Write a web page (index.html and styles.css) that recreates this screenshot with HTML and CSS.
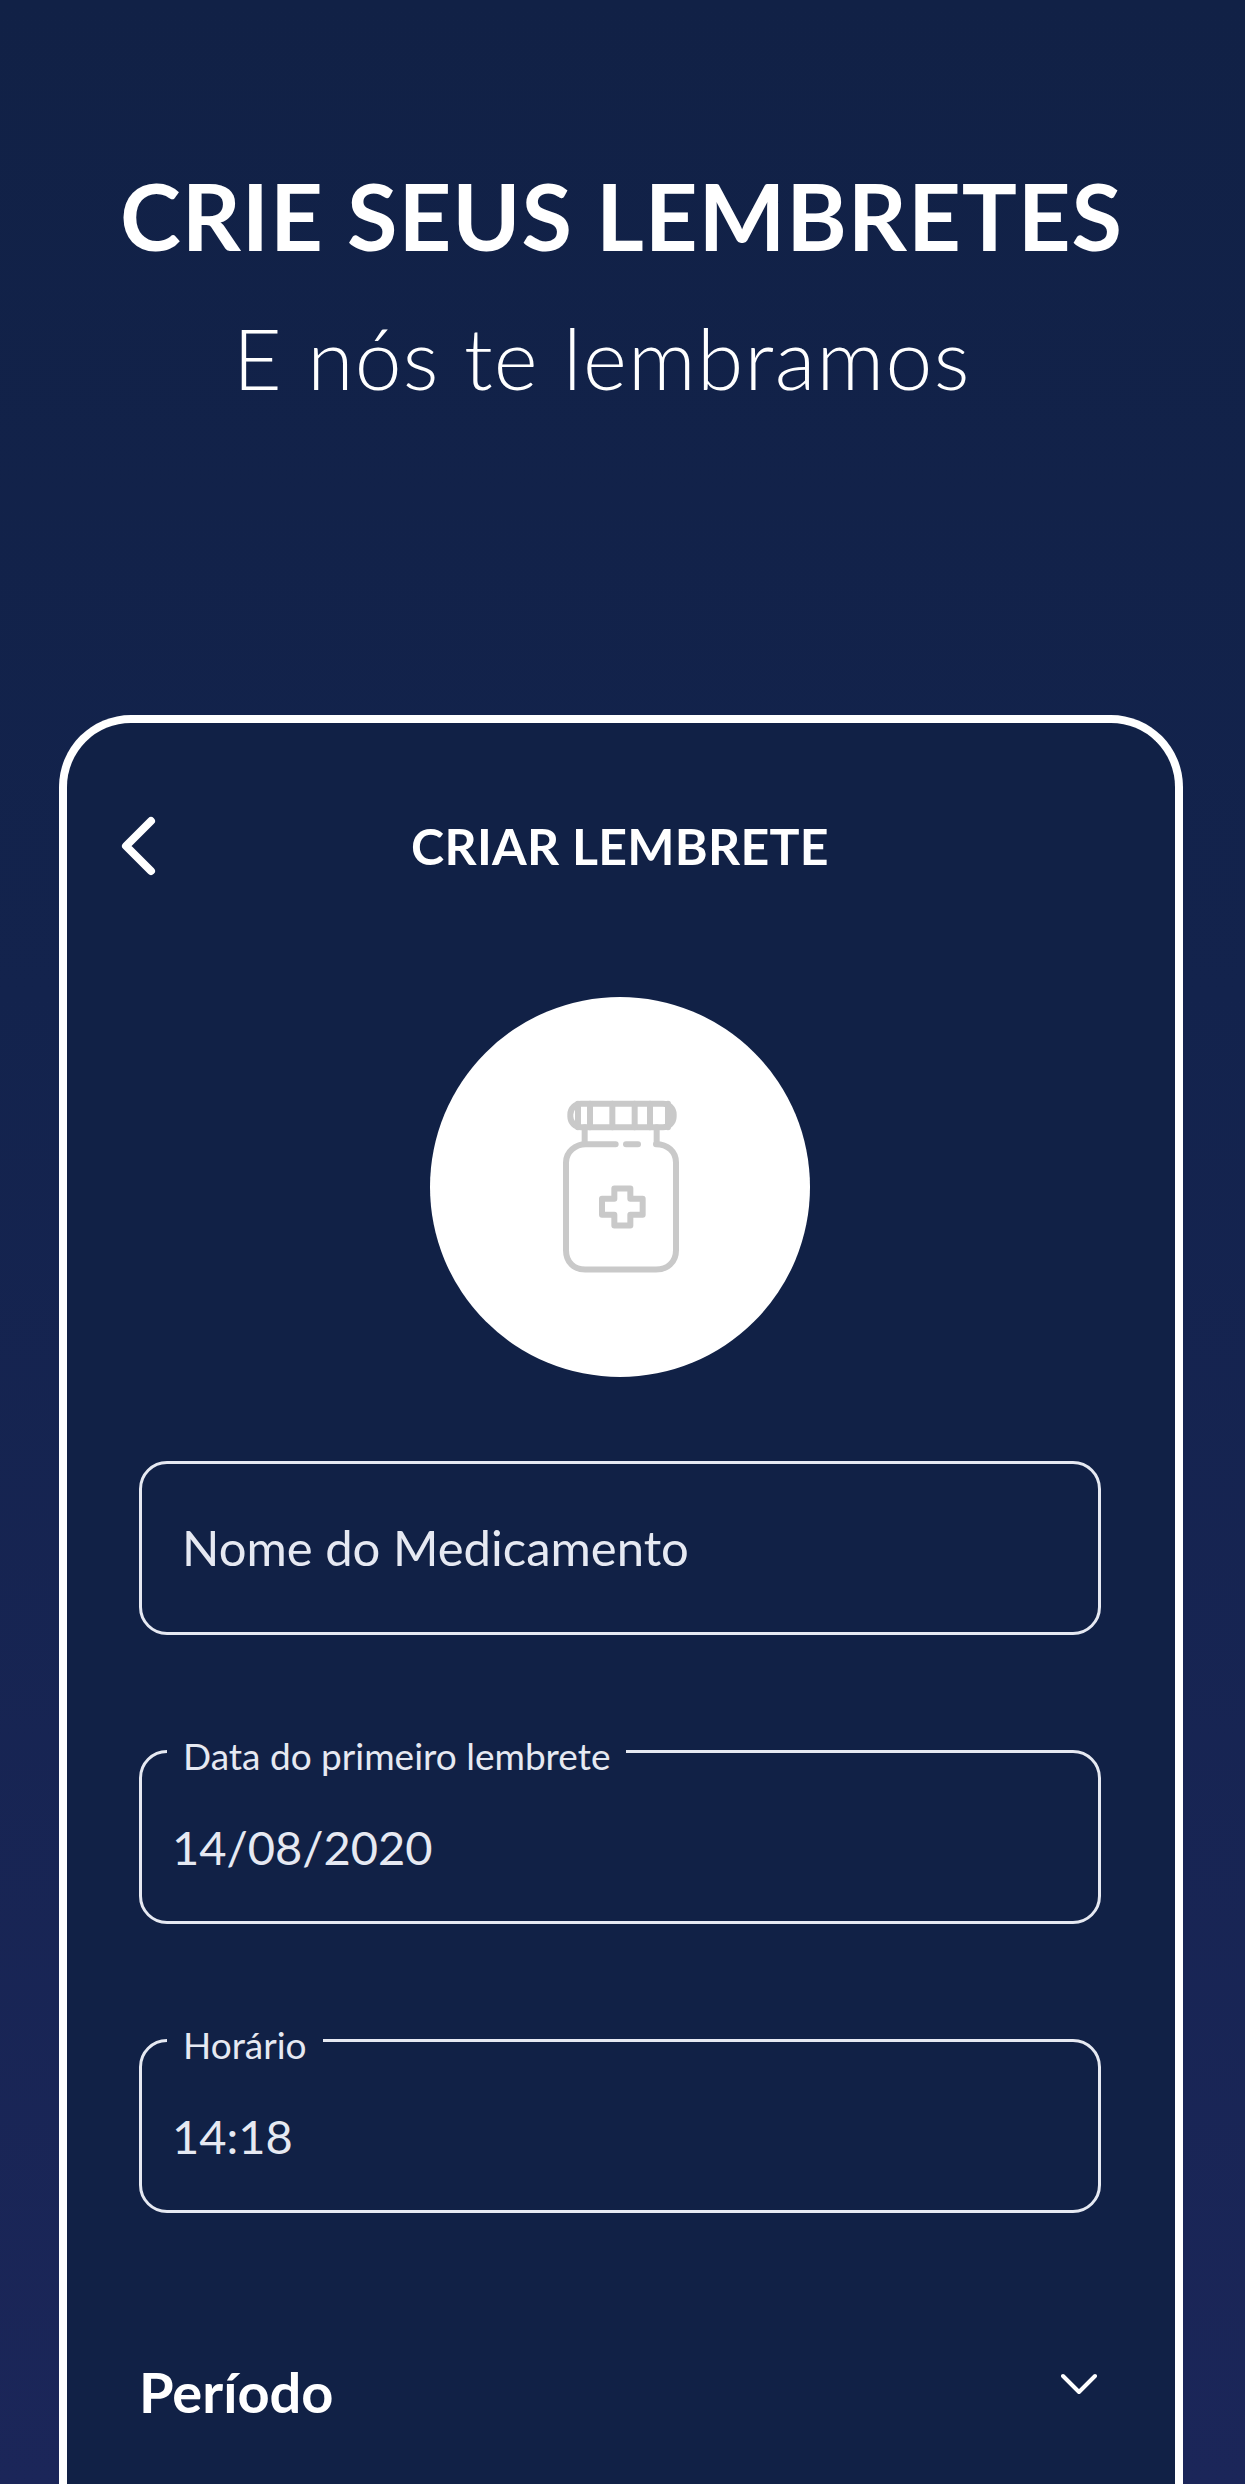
FILE: index.html
```html
<!DOCTYPE html>
<html lang="pt-BR">
<head>
    <meta charset="UTF-8">
    <title>Crie seus lembretes</title>
    <link rel="stylesheet" href="styles.css">
</head>
<body>
    <header class="hero">
        <h1>CRIE SEUS LEMBRETES</h1>
        <h2>E nós te lembramos</h2>
    </header>
    <main class="card">
        <div class="card-top">
            <svg class="back" viewBox="0 0 36 60" aria-hidden="true">
                <path d="M31 5 6 30l25 25"/>
            </svg>
            <h3>CRIAR LEMBRETE</h3>
        </div>
        <div class="photo">
            <svg class="bottle" viewBox="483 360 360 530" aria-hidden="true">
                <rect x="514" y="374" width="310" height="70" rx="32"/>
                <path d="M537 374v70M573 374v70M640 374v70M707 374v70M753 374v70M807 374v70"/>
                <path d="M557 444v50M773 444v50"/>
                <path d="M650 495h-90c-30 0-59 22-59 55v263c0 36 24 58 58 58h212c34 0 60-22 60-58V550c0-33-25-55-60-55"/>
                <path d="M681 495h36"/>
                <path d="M646 628h48v31h37v48h-37v32h-48v-32h-37v-48h37z"/>
            </svg>
        </div>
        <div class="box box-plain">Nome do Medicamento</div>
        <fieldset class="box">
            <legend>Data do primeiro lembrete</legend>
            <span class="value">14/08/2020</span>
        </fieldset>
        <fieldset class="box">
            <legend>Horário</legend>
            <span class="value">14:18</span>
        </fieldset>
        <div class="period">
            <span>Período</span>
            <svg class="caret" viewBox="0 0 36 22" aria-hidden="true">
                <path d="M2 3l16 16L34 3"/>
            </svg>
        </div>
    </main>
</body>
</html>
```

FILE: styles.css
```css
html, body {
    margin: 0;
    height: 2484px;
    overflow: hidden;
}

body {
    background: linear-gradient(180deg, #112146 0%, #13234d 40%, #1b2659 100%);
    font-family: Lato, "Open Sans", sans-serif;
    color: #fff;
}

.hero {
    height: 715px;
    box-sizing: border-box;
    padding-top: 160px;
}

.hero h1 {
    margin: 0 2px 0 0;
    font-size: 92px;
    line-height: 112px;
    font-weight: 700;
    letter-spacing: 0.9px;
    text-align: center;
}

.hero h2 {
    margin: 38px 0 0 233px;
    font-size: 84px;
    line-height: 96px;
    font-weight: 300;
    letter-spacing: 1.3px;
}

.card {
    margin: 0 62px 0 59px;
    height: 1769px;
    box-sizing: border-box;
    padding: 0 74px 0 72px;
    border: 8px solid #fff;
    border-bottom: 0;
    border-radius: 72px 72px 0 0;
    background: #112146;
}

.card-top {
    position: relative;
    height: 261px;
    display: flex;
    justify-content: center;
    padding-top: 95px;
    box-sizing: border-box;
}

.card-top h3 {
    margin: 0;
    font-size: 50px;
    line-height: 56px;
    font-weight: 700;
    letter-spacing: 0.3px;
}

.back {
    position: absolute;
    left: -19px;
    top: 93px;
    width: 36px;
    height: 60px;
    fill: none;
    stroke: #fff;
    stroke-width: 8;
    stroke-linecap: round;
    stroke-linejoin: round;
}

.photo {
    width: 380px;
    height: 380px;
    margin: 13px auto 0;
    border-radius: 50%;
    background: #fff;
    display: flex;
    align-items: center;
    justify-content: center;
}

.bottle {
    width: 120px;
    height: 177px;
    fill: none;
    stroke: #c9c9c9;
    stroke-width: 18;
    stroke-linecap: round;
    stroke-linejoin: round;
}

.box {
    display: block;
    box-sizing: border-box;
    height: 186.5px;
    margin: 102.5px 0 0;
    padding: 0 0 0 30px;
    border: 3px solid #e6e9f2;
    border-radius: 28px;
    color: #e6e9f2;
    min-width: 0;
}

.box-plain {
    height: 174px;
    margin-top: 84px;
    display: flex;
    align-items: center;
    padding: 0 0 2px 40px;
    font-size: 49px;
}

.box legend {
    margin-left: -5px;
    padding: 8px 16px 0;
    font-size: 37px;
    line-height: 20px;
}

.value {
    display: block;
    margin-top: 54px;
    font-size: 47px;
    line-height: 54px;
}

.period {
    display: flex;
    justify-content: space-between;
    align-items: flex-start;
    margin-top: 146px;
    font-size: 56px;
    line-height: 66px;
    font-weight: 700;
}

.caret {
    width: 36px;
    height: 22px;
    margin: 14px 4px 0 0;
    fill: none;
    stroke: #fff;
    stroke-width: 4;
    stroke-linecap: round;
    stroke-linejoin: round;
}
```
